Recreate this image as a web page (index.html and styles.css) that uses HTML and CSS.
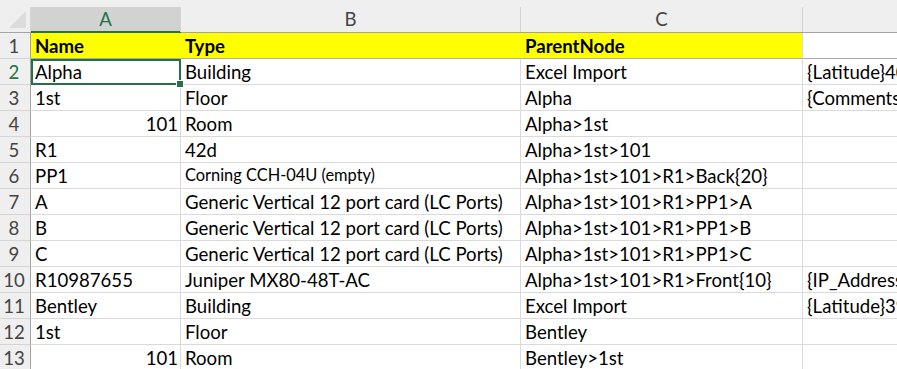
FILE: index.html
```html
<!DOCTYPE html>
<html lang="en">
<head>
  <meta charset="UTF-8" />
  <title>Import Sheet</title>
  <link rel="stylesheet" href="styles.css">
</head>
<body>
  <div class="sheet">
    <!-- column headers -->
    <div class="colhead corner"><span class="label"><i class="tri"></i></span></div>
    <div class="colhead active"><span class="label">A</span></div>
    <div class="colhead"><span class="label">B</span></div>
    <div class="colhead"><span class="label">C</span></div>
    <div class="colhead"><span class="label"></span></div>

    <div class="rowhead">1</div>
    <div class="cell head">Name</div>
    <div class="cell head">Type</div>
    <div class="cell head">ParentNode</div>
    <div class="cell headplain"></div>

    <div class="rowhead current">2</div>
    <div class="cell selected">Alpha<span class="handle"></span></div>
    <div class="cell">Building</div>
    <div class="cell">Excel Import</div>
    <div class="cell">{Latitude}40.71</div>

    <div class="rowhead">3</div>
    <div class="cell">1st</div>
    <div class="cell">Floor</div>
    <div class="cell">Alpha</div>
    <div class="cell">{Comments}</div>

    <div class="rowhead">4</div>
    <div class="cell num">101</div>
    <div class="cell">Room</div>
    <div class="cell">Alpha&gt;1st</div>
    <div class="cell"></div>

    <div class="rowhead">5</div>
    <div class="cell">R1</div>
    <div class="cell">42d</div>
    <div class="cell">Alpha&gt;1st&gt;101</div>
    <div class="cell"></div>

    <div class="rowhead">6</div>
    <div class="cell">PP1</div>
    <div class="cell small">Corning CCH-04U (empty)</div>
    <div class="cell">Alpha&gt;1st&gt;101&gt;R1&gt;Back{20}</div>
    <div class="cell"></div>

    <div class="rowhead">7</div>
    <div class="cell">A</div>
    <div class="cell">Generic Vertical 12 port card (LC Ports)</div>
    <div class="cell">Alpha&gt;1st&gt;101&gt;R1&gt;PP1&gt;A</div>
    <div class="cell"></div>

    <div class="rowhead">8</div>
    <div class="cell">B</div>
    <div class="cell">Generic Vertical 12 port card (LC Ports)</div>
    <div class="cell">Alpha&gt;1st&gt;101&gt;R1&gt;PP1&gt;B</div>
    <div class="cell"></div>

    <div class="rowhead">9</div>
    <div class="cell">C</div>
    <div class="cell">Generic Vertical 12 port card (LC Ports)</div>
    <div class="cell">Alpha&gt;1st&gt;101&gt;R1&gt;PP1&gt;C</div>
    <div class="cell"></div>

    <div class="rowhead">10</div>
    <div class="cell">R10987655</div>
    <div class="cell">Juniper MX80-48T-AC</div>
    <div class="cell">Alpha&gt;1st&gt;101&gt;R1&gt;Front{10}</div>
    <div class="cell">{IP_Address}</div>

    <div class="rowhead">11</div>
    <div class="cell">Bentley</div>
    <div class="cell">Building</div>
    <div class="cell">Excel Import</div>
    <div class="cell">{Latitude}39.73</div>

    <div class="rowhead">12</div>
    <div class="cell">1st</div>
    <div class="cell">Floor</div>
    <div class="cell">Bentley</div>
    <div class="cell"></div>

    <div class="rowhead">13</div>
    <div class="cell num">101</div>
    <div class="cell">Room</div>
    <div class="cell">Bentley&gt;1st</div>
    <div class="cell"></div>
  </div>
</body>
</html>
```

FILE: styles.css
```css
html, body {
  margin: 0;
  padding: 0;
  background: #fff;
  overflow: hidden;
}
.sheet {
  display: grid;
  grid-template-columns: 31px 150px 340px 282px 300px;
  grid-template-rows: 33px;
  grid-auto-rows: 26px;
  font-family: Lato, "Liberation Sans", sans-serif;
  font-size: 18.6px;
  line-height: 22px;
  color: #000;
}

/* column letters */
.colhead {
  background: #efefef;
  border-bottom: 1px solid #a3a3a3;
  box-sizing: border-box;
  display: flex;
  align-items: flex-end;
}
.colhead .label {
  flex: 1;
  height: 25px;
  border-right: 1px solid #d4d4d4;
  box-sizing: border-box;
  text-align: center;
  line-height: 24px;
  color: #444;
}
.colhead.active {
  border-bottom-color: #217346;
}
.colhead.active .label {
  background: #d2d2d2;
  color: #217346;
  box-shadow: inset 0 -1px 0 #217346;
}
.corner .label {
  position: relative;
}
.tri {
  position: absolute;
  right: 4px;
  bottom: 4px;
  width: 0;
  height: 0;
  border-left: 17px solid transparent;
  border-bottom: 17px solid #dcdcdc;
}

/* row numbers */
.rowhead {
  background: #efefef;
  border-right: 1px solid #a3a3a3;
  border-bottom: 1px solid #d4d4d4;
  box-sizing: border-box;
  color: #444;
  text-align: center;
  line-height: 26px;
  padding-right: 2px;
}
.rowhead.current {
  color: #217346;
}

/* cells */
.cell {
  border-right: 1px solid #dadada;
  border-bottom: 1px solid #dadada;
  box-sizing: border-box;
  padding: 0 3px 1px 4px;
  white-space: nowrap;
  overflow: hidden;
  display: flex;
  align-items: flex-end;
  position: relative;
}
.cell.num {
  justify-content: flex-end;
  padding-right: 2px;
}
.cell.small {
  font-size: 16.4px;
  padding-bottom: 2px;
}
.cell.head {
  background: #ffff00;
  font-weight: bold;
  border-right-color: #ffff00;
  border-bottom-color: #a9a9a9;
}
.cell.head:nth-child(9) {
  border-right-color: #dadada;
}
.cell.headplain {
  border-bottom-color: #a9a9a9;
}
.cell.selected {
  overflow: visible;
  outline: 2px solid #217346;
  outline-offset: -2px;
  z-index: 1;
}
.handle {
  position: absolute;
  right: -4px;
  bottom: -4px;
  width: 6px;
  height: 6px;
  background: #217346;
  border: 1px solid #fff;
}
```
